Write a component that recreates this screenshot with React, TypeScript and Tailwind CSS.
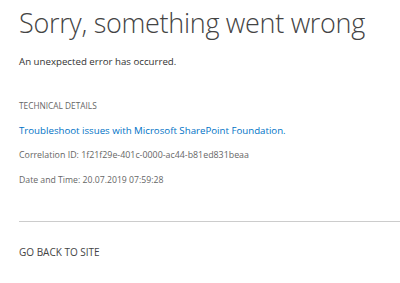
export default function App() {
  return (
    <div className="w-[400px] h-[283px] bg-white overflow-hidden pl-[19px]" style={{ fontFamily: '"Open Sans", "Noto Sans", sans-serif' }}>
      <h1 className="mt-[4px] text-[27px] leading-[38px] font-light text-[#444444] tracking-[-0.3px] whitespace-nowrap">
        Sorry, something went wrong
      </h1>
      <p className="mt-[12px] text-[9.7px] leading-[16px] text-[#333333] whitespace-nowrap">
        An unexpected error has occurred.
      </p>
      <div className="mt-[30px] text-[8.3px] leading-[12px] text-[#666666] whitespace-nowrap">TECHNICAL DETAILS</div>
      <a className="block mt-[12px] text-[9.7px] leading-[14px] text-[#0072c6] whitespace-nowrap">
        Troubleshoot issues with Microsoft SharePoint Foundation.
      </a>
      <div className="mt-[10px] text-[8.85px] leading-[14px] text-[#666666] whitespace-nowrap">
        Correlation ID: 1f21f29e-401c-0000-ac44-b81ed831beaa
      </div>
      <div className="mt-[11px] text-[8.7px] leading-[14px] text-[#666666] whitespace-nowrap">
        Date and Time: 20.07.2019 07:59:28
      </div>
      <div className="mt-[34px] h-px bg-[#cccccc]" />
      <div className="mt-[23px] text-[10px] leading-[14px] text-[#444444] whitespace-nowrap">GO BACK TO SITE</div>
    </div>
  );
}
